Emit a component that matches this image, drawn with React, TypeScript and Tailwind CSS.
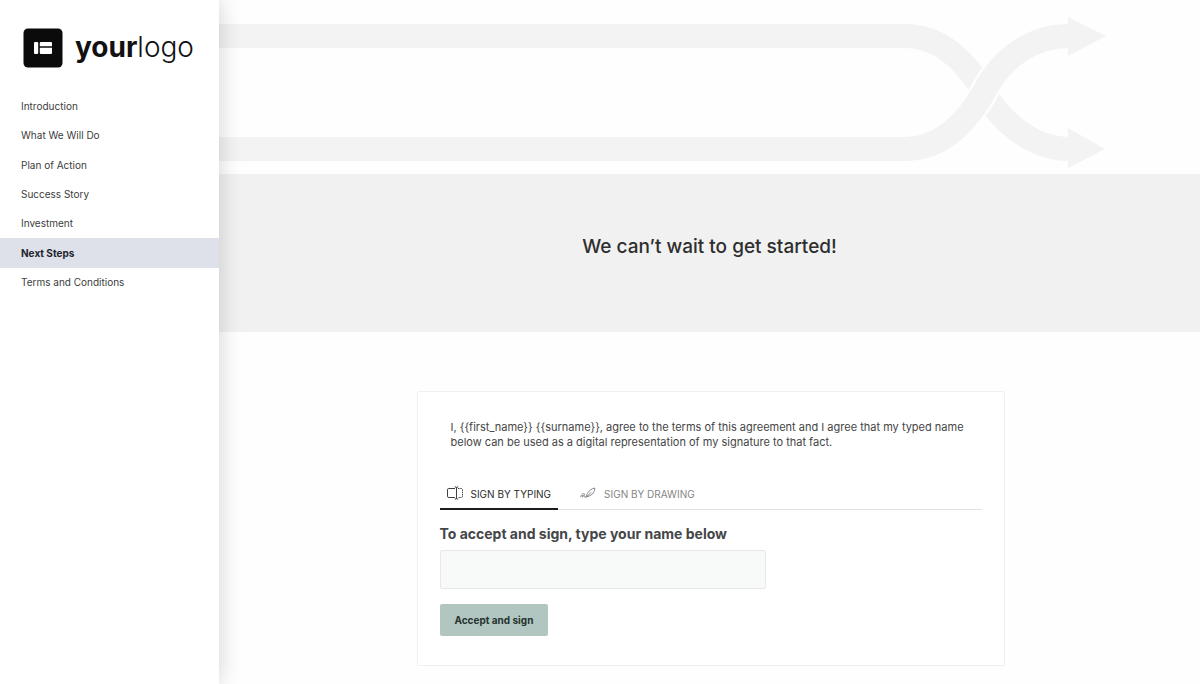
import { useState } from "react";

const sections = [
  "Introduction",
  "What We Will Do",
  "Plan of Action",
  "Success Story",
  "Investment",
  "Next Steps",
  "Terms and Conditions",
];

const agreement =
  "I, {{first_name}} {{surname}}, agree to the terms of this agreement and I agree that my typed name below can be used as a digital representation of my signature to that fact.";

function Logo() {
  return (
    <div className="flex items-center gap-3 pl-[23px] pt-7">
      <svg viewBox="0 0 40 40" className="size-10" aria-hidden="true">
        <rect x=".5" y=".5" width="39" height="39" rx="4.500" fill="#0b0b0b" />
        <rect x="11" y="14" width="4.200" height="12" rx="1" fill="#fff" />
        <path d="M16.800 15a1 1 0 0 1 1-1h10.200a1 1 0 0 1 1 1v3.200H16.800z" fill="#fff" />
        <path d="M16.800 19.800H29v5.200a1 1 0 0 1-1 1H17.800a1 1 0 0 1-1-1z" fill="#fff" />
      </svg>
      <span className="pb-0.5 text-[28px] leading-9 font-bold text-[#111]">
        your<span className="font-light">logo</span>
      </span>
    </div>
  );
}

function Sidebar() {
  const [active, setActive] = useState("Next Steps");
  return (
    <aside className="z-10 w-[219px] shrink-0 bg-white shadow-[0_0_22px_rgba(0,0,0,0.18)]">
      <Logo />
      <nav aria-label="Sections" className="mt-[23px] grid h-[206px] auto-rows-fr">
        {sections.map((name) => (
          <a
            key={name}
            href="#"
            aria-current={name === active ? "page" : undefined}
            onClick={() => setActive(name)}
            className={
              name === active
                ? "flex items-center bg-[#dfe1ea] px-[21px] pt-px text-[10px] font-bold text-[#22242c]"
                : "flex items-center px-[21px] pt-px text-[10px] text-[#3c3c3c]"
            }
          >
            {name}
          </a>
        ))}
      </nav>
    </aside>
  );
}

function CrossingArrows() {
  return (
    <svg
      viewBox="219 0 981 174"
      preserveAspectRatio="xMinYMin slice"
      className="h-[174px] w-full bg-[#fefefe]"
      aria-hidden="true"
    >
      <g fill="none" stroke="#f3f3f3" strokeWidth="24">
        <path d="M219 36H905C940 36 965 60 984 92C1003 125 1035 149 1069 149" />
        <path d="M905 149C940 149 965 125 984 92C1003 55 1035 36 1069 36" stroke="#fefefe" strokeWidth="29" />
        <path d="M219 149H905C940 149 965 125 984 92C1003 55 1035 36 1069 36" />
      </g>
      <path d="M1068 17L1106 36L1068 56ZM1068 128L1105 149L1068 168Z" fill="#f3f3f3" />
    </svg>
  );
}

function TypingIcon() {
  return (
    <svg viewBox="0 0 16 14" className="h-[14px] w-4" fill="none" stroke="currentColor" strokeWidth=".9" aria-hidden="true">
      <path d="M8 2.500H1.800Q.5 2.500 .5 3.800V10.200Q.5 11.500 1.800 11.500H8" />
      <path d="M11 2.500H14.200Q15.500 2.500 15.500 3.800V10.200Q15.500 11.500 14.200 11.500H11" strokeDasharray="1.500 .8" />
      <path d="M7.800 .8Q9.500 .8 9.500 2V12Q9.500 13.200 7.800 13.200M11.200 .8Q9.500 .8 9.500 2M9.500 12Q9.500 13.200 11.200 13.200" />
    </svg>
  );
}

function DrawingIcon() {
  return (
    <svg viewBox="0 0 16 12" className="h-3 w-4" fill="none" stroke="currentColor" strokeLinecap="round" strokeLinejoin="round" aria-hidden="true">
      <path d="M6.500 9.800C6 7.500 9 2.500 14.500 1C15.500 3.500 13 8.500 7.500 9.500M6 10.500L11 5.500" />
      <path d="M.7 9.500C1.500 6.500 4.800 5.800 4.500 7.500C4.200 9 1.800 10.800 2 9.500C2.200 8.400 4.200 8 4.200 9.200C4.200 10.300 5.200 10.200 6.200 9.800" />
    </svg>
  );
}

function SignatureCard() {
  const [mode, setMode] = useState("typing");
  const tab = "-mb-px flex h-8 items-center gap-2 border-b-2 px-[7px] text-[10px]";
  const on = " border-[#1c1c1c] text-[#2b2b2b]";
  const off = " border-transparent text-[#858585]";
  return (
    <form
      onSubmit={(e) => e.preventDefault()}
      className="mx-auto mt-[59px] w-full max-w-[588px] rounded-xs border border-[#f0f0f0] bg-white px-[22px] pt-7 pb-[29px]"
    >
      <p className="px-[11px] text-[11px] leading-[15px] text-[#454545]">{agreement}</p>
      <div role="tablist" className="mt-7 flex gap-[15px] border-b border-[#e2e2e2]">
        <button type="button" role="tab" aria-selected={mode === "typing"} onClick={() => setMode("typing")} className={tab + (mode === "typing" ? on : off)}>
          <TypingIcon />
          <span className="pt-0.5">SIGN BY TYPING</span>
        </button>
        <button type="button" role="tab" aria-selected={mode === "drawing"} onClick={() => setMode("drawing")} className={tab + (mode === "drawing" ? on : off)}>
          <DrawingIcon />
          <span className="pt-0.5">SIGN BY DRAWING</span>
        </button>
      </div>
      <label htmlFor="signature" className="mt-[14px] block text-[14px] leading-5 font-bold text-[#444648]">
        To accept and sign, type your name below
      </label>
      <input
        id="signature"
        type="text"
        className="mt-[6px] block h-[39px] w-full max-w-[326px] rounded-xs border border-[#e6e9e8] bg-[#f8f9f9] px-3 text-sm"
      />
      <button type="submit" className="mt-[15px] block h-8 rounded-xs bg-[#b1c6c0] px-[15px] pt-px text-[10px] font-bold text-[#26332f]">
        Accept and sign
      </button>
    </form>
  );
}

export default function App() {
  return (
    <div className="flex min-h-screen bg-[#fefefe] font-['Inter','Liberation_Sans',sans-serif]">
      <Sidebar />
      <main className="min-w-0 flex-1">
        <CrossingArrows />
        <section className="flex h-[158px] justify-center bg-[#f1f1f1] pt-[58px]">
          <h1 className="text-[19px] leading-[30px] font-medium text-[#2e2e2e]">We can’t wait to get started!</h1>
        </section>
        <div className="pl-0.5">
          <SignatureCard />
        </div>
      </main>
    </div>
  );
}
